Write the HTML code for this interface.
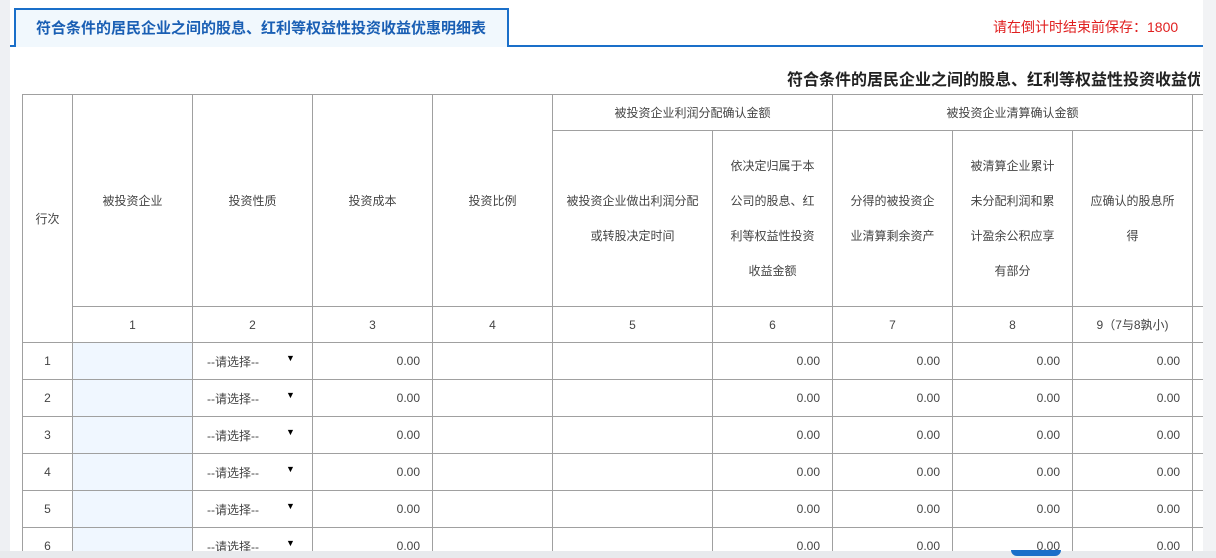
<!DOCTYPE html>
<html><head><meta charset="utf-8"><style>
*{margin:0;padding:0;box-sizing:border-box}
body{width:1216px;height:558px;overflow:hidden;background:#fff;font-family:"Liberation Sans","Noto Sans CJK SC",sans-serif;color:#333;position:relative}
.lg{position:absolute;left:0;top:0;width:10px;height:558px;background:#eef0f3}
.rg{position:absolute;left:1203px;top:0;width:13px;height:558px;background:#f2f3f5}
.bline{position:absolute;left:10px;top:45px;width:1193px;height:2px;background:#1a6fc9}
.tab{position:absolute;left:14px;top:8px;width:495px;height:39px;border:2px solid #1a6fc9;border-bottom:none;background:#f1f8fd;color:#1a5fb4;font-size:15px;font-weight:bold;line-height:38px;padding-left:20px}
.red{position:absolute;left:993px;top:17px;color:#e02020;font-size:14px}
.title{position:absolute;left:787px;top:66px;font-size:16px;font-weight:bold;color:#222;white-space:nowrap;width:413px;overflow:hidden}
.wrap{position:absolute;left:22px;top:94px;width:1181px;height:457px;overflow:hidden}
table{border-collapse:collapse;table-layout:fixed;width:1271px;font-size:12px}
td{border:1px solid #a0a0a0;text-align:center;color:#444}
.h1 td{height:36px}
.h2 td{height:176px;line-height:35px;padding:0 14px}
.h2 td.w{padding:0 9px}
.h3 td{height:36px}
.r td{height:37px}
.num{text-align:right;padding-right:12px}
.in{background:#f0f7ff}
.sel{text-align:left;padding-left:14px;position:relative}
.sel b{position:absolute;left:93px;top:10px;font-size:9px;color:#000}
.bot{position:absolute;left:0;top:551px;width:1216px;height:7px;background:#e8eaed}
.sb{position:absolute;left:1011px;top:550px;width:50px;height:6px;background:#1a6fc9;border-radius:0 0 6px 6px}
</style></head><body>
<div class="lg"></div><div class="rg"></div>
<div class="bline"></div>
<div class="tab">符合条件的居民企业之间的股息、红利等权益性投资收益优惠明细表</div>
<div class="red">请在倒计时结束前保存：1800</div>
<div class="title">符合条件的居民企业之间的股息、红利等权益性投资收益优</div>
<div class="wrap"><table>
<colgroup><col style="width:50px"><col style="width:120px"><col style="width:120px"><col style="width:120px"><col style="width:120px"><col style="width:160px"><col style="width:120px"><col style="width:120px"><col style="width:120px"><col style="width:120px"><col style="width:101px"></colgroup>
<tr class="h1"><td rowspan="3">行次</td><td rowspan="2">被投资企业</td><td rowspan="2">投资性质</td><td rowspan="2">投资成本</td><td rowspan="2">投资比例</td><td colspan="2">被投资企业利润分配确认金额</td><td colspan="3">被投资企业清算确认金额</td><td></td></tr>
<tr class="h2"><td class="w">被投资企业做出利润分配或转股决定时间</td><td>依决定归属于本公司的股息、红利等权益性投资收益金额</td><td>分得的被投资企业清算剩余资产</td><td>被清算企业累计未分配利润和累计盈余公积应享有部分</td><td>应确认的股息所得</td><td></td></tr>
<tr class="h3"><td>1</td><td>2</td><td>3</td><td>4</td><td>5</td><td>6</td><td>7</td><td>8</td><td>9（7与8孰小)</td><td></td></tr>
<tr class="r"><td>1</td><td class="in"></td><td class="sel">--请选择--<b>▼</b></td><td class="num">0.00</td><td></td><td></td><td class="num">0.00</td><td class="num">0.00</td><td class="num">0.00</td><td class="num">0.00</td><td></td></tr>
<tr class="r"><td>2</td><td class="in"></td><td class="sel">--请选择--<b>▼</b></td><td class="num">0.00</td><td></td><td></td><td class="num">0.00</td><td class="num">0.00</td><td class="num">0.00</td><td class="num">0.00</td><td></td></tr>
<tr class="r"><td>3</td><td class="in"></td><td class="sel">--请选择--<b>▼</b></td><td class="num">0.00</td><td></td><td></td><td class="num">0.00</td><td class="num">0.00</td><td class="num">0.00</td><td class="num">0.00</td><td></td></tr>
<tr class="r"><td>4</td><td class="in"></td><td class="sel">--请选择--<b>▼</b></td><td class="num">0.00</td><td></td><td></td><td class="num">0.00</td><td class="num">0.00</td><td class="num">0.00</td><td class="num">0.00</td><td></td></tr>
<tr class="r"><td>5</td><td class="in"></td><td class="sel">--请选择--<b>▼</b></td><td class="num">0.00</td><td></td><td></td><td class="num">0.00</td><td class="num">0.00</td><td class="num">0.00</td><td class="num">0.00</td><td></td></tr>
<tr class="r"><td>6</td><td class="in"></td><td class="sel">--请选择--<b>▼</b></td><td class="num">0.00</td><td></td><td></td><td class="num">0.00</td><td class="num">0.00</td><td class="num">0.00</td><td class="num">0.00</td><td></td></tr>
</table></div>
<div class="bot"></div><div class="sb"></div>
</body></html>
